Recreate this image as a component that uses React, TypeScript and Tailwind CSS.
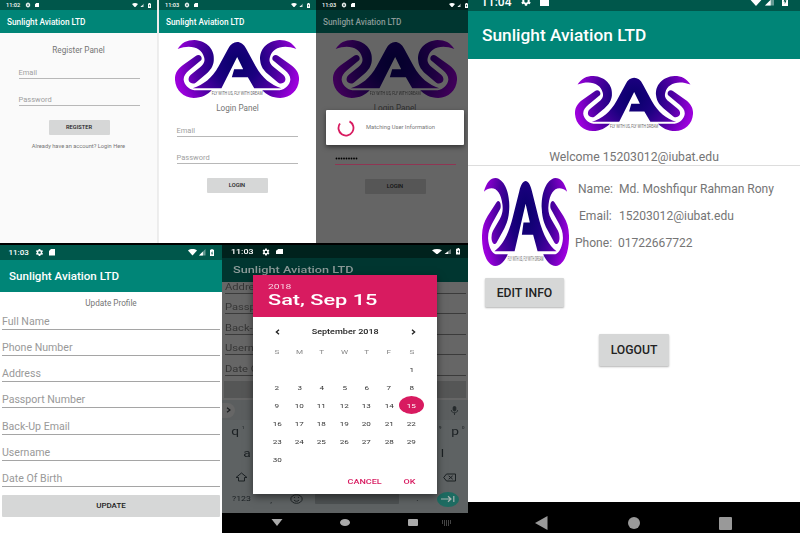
import React from "react";

function Logo({ id, className }: { id: string; className: string }) {
  const fill = `url(#${id})`;
  return (
    <svg viewBox="52 120 371 174" preserveAspectRatio="none" className={className}>
      <defs>
        <radialGradient id={id} gradientUnits="userSpaceOnUse" cx="237" cy="190" r="186">
          <stop offset="0" stopColor="#08006a" />
          <stop offset="0.35" stopColor="#1c0080" />
          <stop offset="0.65" stopColor="#4b00a0" />
          <stop offset="1" stopColor="#9c00dc" />
        </radialGradient>
      </defs>
      {[false, true].map((flip) => (
        <g key={String(flip)} fill={fill} transform={flip ? "translate(475 0) scale(-1 1)" : undefined}>
          <path d="M60 147 C72 128 88 120 110 120 C148 122 172 150 168 182 C166 200 158 210 146 221 L114 248 C104 255 90 247 93 235 C94 229 97 226 102 222 L128 201 C140 191 142 182 139 172 C132 144 100 132 60 147Z" />
          <path d="M130 181 C136 172 126 160 114 168 L76 195 C58 208 51 222 52 240 C54 272 78 293 108 294 C132 294 150 284 162 271 L110 271 C92 268 80 254 78 240 C77 228 84 220 94 211Z" />
        </g>
      ))}
      <path
        fill={fill}
        d="M105 265 C138 253 162 236 183 198 L211 146 C224 119 252 119 265 146 L293 198 C314 236 338 253 370 265 L289 265 L270 232 L222 232 L229 208 L256 208 L238 171 L191 265Z"
      />
      <text x="238" y="285" textAnchor="middle" textLength="152" lengthAdjust="spacingAndGlyphs" fontSize="15" fontFamily="Roboto, sans-serif" fill="#666">
        FLY WITH US, FLY WITH DREAM
      </text>
    </svg>
  );
}

function Gear({ className }: { className: string }) {
  return (
    <svg viewBox="2 2 22 20" className={className} fill="currentColor">
      <path d="M19.4 13c.1-.6.1-1.400 0-2l2.100-1.600-2-3.500-2.500 1a7 7 0 0 0-1.700-1L15 3.200h-4l-.4 2.700a7 7 0 0 0-1.700 1l-2.500-1-2 3.500L6.500 11c-.1.600-.1 1.400 0 2l-2.100 1.600 2 3.500 2.500-1a7 7 0 0 0 1.700 1l.4 2.700h4l.4-2.700a7 7 0 0 0 1.700-1l2.500 1 2-3.500zM13 15.200a3.200 3.200 0 1 1 0-6.400 3.200 3.200 0 0 1 0 6.400z" />
    </svg>
  );
}
function Sd({ className }: { className: string }) {
  return (
    <svg viewBox="0 0 18 20" preserveAspectRatio="none" className={className} fill="currentColor">
      <path d="M6 0H18V20H0V6z" />
    </svg>
  );
}
function Wifi({ className }: { className: string }) {
  return (
    <svg viewBox="0 0 24 18" preserveAspectRatio="none" className={className} fill="currentColor">
      <path d="M0 4C7-1 17-1 24 4L12 18z" />
    </svg>
  );
}
function Signal({ className }: { className: string }) {
  return (
    <svg viewBox="0 0 20 20" preserveAspectRatio="none" className={className} fill="currentColor">
      <path d="M0 20L20 0V20z" opacity=".4" />
      <path d="M0 20L12 8V20z" />
    </svg>
  );
}
function Battery({ className }: { className: string }) {
  return (
    <svg viewBox="0 0 12 20" preserveAspectRatio="none" className={className}>
      <path fill="currentColor" fillRule="evenodd" d="M4 0H8V2H12V20H0V2H4zM7 5L3 12H5.500V17L9 10H7z" />
    </svg>
  );
}

function SmallBars({ time, dim }: { time: string; dim?: boolean }) {
  return (
    <>
      <div className={`flex h-[10px] shrink-0 items-center pr-[6px] pl-[6px] text-white ${dim ? "bg-[#00221d]" : "bg-[#00574b]"}`}>
        <span className="w-[15px] text-[5.600px] leading-[10px] font-medium">{time}</span>
        <Gear className="ml-[3.500px] size-[6px]" />
        <Sd className="ml-[4px] h-[4.500px] w-[4px]" />
        <Wifi className="ml-auto h-[4.500px] w-[6px]" />
        <Signal className="ml-[1.500px] size-[4.500px]" />
        <Battery className="ml-[4px] h-[5px] w-[3px]" />
      </div>
      <div className={`flex h-[23px] shrink-0 items-center pt-[1px] pl-[7px] text-[8.250px] font-medium ${dim ? "bg-[#003630] text-[#8b9a98]" : "bg-[#008577] text-white"}`}>
        Sunlight Aviation LTD
      </div>
    </>
  );
}

function SmallField({ label, className }: { label: string; className: string }) {
  return (
    <div className={`flex h-[13px] w-[121px] items-end border-b border-[#b8b8b8] text-[7.500px] leading-[11px] text-[#a0a0a0] ${className}`}>
      {label}
    </div>
  );
}

function SmallButton({ label, className }: { label: string; className: string }) {
  return (
    <div className={`flex h-[15px] w-[61px] items-center justify-center rounded-[1px] pt-[0.500px] text-[5.700px] font-medium ${className}`}>
      {label}
    </div>
  );
}

function RegisterScreen() {
  return (
    <section className="flex w-[158px] shrink-0 flex-col border-r border-[#ececec] bg-[#fafafa]">
      <SmallBars time="11:02" />
      <div className="mt-[11px] h-[13px] text-center text-[8.200px] leading-[13px] text-[#757575]">Register Panel</div>
      <SmallField label="Email" className="mt-[9px] ml-[18.500px]" />
      <SmallField label="Password" className="mt-[14px] ml-[18.500px]" />
      <SmallButton label="REGISTER" className="mt-[14px] ml-[48.500px] bg-[#d6d7d7] text-[#222]" />
      <div className="mt-[6px] text-center text-[5.700px] leading-[10px] text-[#757575]">Already have an account? Login Here</div>
    </section>
  );
}

function LoginScreen() {
  return (
    <section className="flex w-[158px] shrink-0 flex-col border-l border-[#eeeeee] bg-white">
      <SmallBars time="11:03" />
      <Logo id="login" className="mt-[7px] ml-[16px] h-[58px] w-[124px] shrink-0" />
      <div className="mt-[4px] h-[12px] text-center text-[8.200px] leading-[13px] text-[#757575]">Login Panel</div>
      <SmallField label="Email" className="mt-[10px] ml-[17.500px]" />
      <SmallField label="Password" className="mt-[14px] ml-[17.500px]" />
      <SmallButton label="LOGIN" className="mt-[14px] ml-[47.500px] bg-[#d6d7d7] text-[#222]" />
    </section>
  );
}

function MatchingScreen() {
  return (
    <section className="relative w-[152px] shrink-0 overflow-hidden">
      <div className="flex h-full w-[158px] flex-col bg-[#656565]">
        <SmallBars time="11:03" dim />
        <Logo id="matching" className="mt-[7px] ml-[17px] h-[58px] w-[124px] shrink-0 brightness-[0.4]" />
        <div className="mt-[4px] h-[12px] text-center text-[8.200px] leading-[13px] text-[#2f2f2f]">Login Panel</div>
        <div className="mt-[37px] ml-[18.500px] flex h-[14px] w-[121px] items-center border-b border-[#8f3553]">
          <svg viewBox="0 0 24 3" className="mt-[2px] h-[3px] w-[24px]">
            {Array.from({ length: 9 }, (_, i) => (
              <circle key={i} cx={1.500 + i * 2.500} cy="1.500" r="0.900" fill="#000" />
            ))}
          </svg>
        </div>
        <SmallButton label="LOGIN" className="mt-[14px] ml-[48.500px] bg-[#565656] text-[#111]" />
      </div>
      <div className="absolute top-[110px] left-[10px] flex h-[35px] w-[138px] items-center rounded-[1px] bg-white shadow-[0_2px_5px_rgba(0,0,0,0.5)]">
        <svg viewBox="0 0 18 18" className="ml-[11px] size-[18px]" fill="none" stroke="#d81b60" strokeWidth="1.800">
          <path d="M3 4.500A7.500 7.500 0 1 0 12.500 2.400" />
        </svg>
        <span className="ml-[11px] text-[5.800px] text-[#777]">Matching User Information</span>
      </div>
    </section>
  );
}

const fields = ["Full Name", "Phone Number", "Address", "Passport Number", "Back-Up Email", "Username", "Date Of Birth"];

function UpdateScreen() {
  return (
    <section className="flex w-[222px] shrink-0 flex-col bg-white">
      <div className="flex h-[15px] shrink-0 items-center bg-[#00574b] px-[8.500px] text-white">
        <span className="w-[21px] text-[8px] leading-[16px] font-medium">11:03</span>
        <Gear className="ml-[5px] size-[9px]" />
        <Sd className="ml-[5px] h-[6.500px] w-[6px]" />
        <Wifi className="ml-auto h-[6.500px] w-[9px]" />
        <Signal className="ml-[2px] size-[6.500px]" />
        <Battery className="ml-[4px] h-[7.500px] w-[4px]" />
      </div>
      <div className="flex h-[32px] shrink-0 items-center bg-[#008577] pt-[2px] pl-[9px] text-[11.600px] font-medium text-white">Sunlight Aviation LTD</div>
      <div className="mt-[4px] h-[13px] text-center text-[8.200px] leading-[14px] text-[#757575]">Update Profile</div>
      {fields.map((f) => (
        <div key={f} className="mx-[2px] h-[26.300px] shrink-0">
          <div className="flex h-[20.500px] items-end border-b border-[#a5a5a5] text-[10.600px] leading-[14px] text-[#999]">{f}</div>
        </div>
      ))}
      <div className="mx-[2px] mt-[2px] flex h-[21.500px] items-center justify-center rounded-[1px] bg-[#d6d7d7] pt-[1px] text-[8px] font-medium text-[#222]">UPDATE</div>
    </section>
  );
}

const weeks = [
  ["S", "M", "T", "W", "T", "F", "S"],
  ["", "", "", "", "", "", "1"],
  ["2", "3", "4", "5", "6", "7", "8"],
  ["9", "10", "11", "12", "13", "14", "15"],
  ["16", "17", "18", "19", "20", "21", "22"],
  ["23", "24", "25", "26", "27", "28", "29"],
  ["30", "", "", "", "", "", ""],
];

function Key({ children, className }: { children: React.ReactNode; className: string }) {
  return <span className={`inline-block scale-x-125 text-[#1b2023] ${className}`}>{children}</span>;
}

function DatePicker() {
  return (
    <div className="absolute top-[30px] left-[31px] flex h-[219px] w-[184px] flex-col bg-white shadow-[0_3px_8px_rgba(0,0,0,0.5)]">
      <div className="flex h-[42px] shrink-0 flex-col bg-[#d81b60] pt-[6.500px] pl-[15px] text-white">
        <span className="origin-left scale-x-[1.350] text-[7.700px] leading-[10px] text-[#f7d1df]">2018</span>
        <span className="origin-left scale-x-[1.400] text-[15.500px] leading-[17px] font-medium">Sat, Sep 15</span>
      </div>
      <div className="mt-[9px] flex h-[12px] shrink-0 items-center justify-between px-[21.500px] text-[#222]">
        <svg viewBox="0 0 6 8" className="h-[6px] w-[5px]" fill="none" stroke="currentColor" strokeWidth="1.800">
          <path d="M5 1L1.500 4L5 7" />
        </svg>
        <span className="scale-x-[1.330] pt-[1px] text-[6.800px] font-medium">September 2018</span>
        <svg viewBox="0 0 6 8" className="h-[6px] w-[5px]" fill="none" stroke="currentColor" strokeWidth="1.800">
          <path d="M1 1L4.500 4L1 7" />
        </svg>
      </div>
      <div className="mt-[4px] ml-[12.800px] grid w-[157px] shrink-0 grid-cols-7 text-[6px]">
        {weeks.flatMap((w, r) =>
          w.map((d, c) => (
            <div key={`${r}-${c}`} className={`flex h-[18px] items-center justify-center ${r === 0 ? "text-[#888]" : "text-[#333]"}`}>
              {d === "15" ? (
                <span className="flex h-[18px] w-[25px] shrink-0 items-center justify-center rounded-[50%] bg-[#d81b60] text-white">
                  <span className="scale-x-[1.350]">15</span>
                </span>
              ) : (
                <span className="scale-x-[1.350]">{d}</span>
              )}
            </div>
          )),
        )}
      </div>
      <div className="mt-[9.500px] flex h-[10px] items-center text-[6.700px] font-medium text-[#d81b60]">
        <span className="ml-[94px] w-[35px] text-center"><span className="inline-block scale-x-[1.350]">CANCEL</span></span>
        <span className="ml-[17px] w-[20px] text-center"><span className="inline-block scale-x-[1.350]">OK</span></span>
      </div>
    </div>
  );
}

function DateScreen() {
  return (
    <section className="relative flex w-[246px] shrink-0 flex-col bg-[#666]">
      <div className="flex h-[13px] shrink-0 items-center bg-[#00221d] pr-[8px] pl-[9px] text-white">
        <span className="w-[29px] text-[7px] leading-[14px] font-medium"><span className="inline-block origin-left scale-x-[1.270]">11:03</span></span>
        <Gear className="ml-[1px] h-[8px] w-[10px]" />
        <Sd className="ml-[5px] h-[5.500px] w-[7px]" />
        <Wifi className="ml-auto h-[5.500px] w-[10px]" />
        <Signal className="ml-[2px] h-[5.500px] w-[7px]" />
        <Battery className="ml-[5px] h-[6.500px] w-[4.500px]" />
      </div>
      <div className="flex h-[24px] shrink-0 items-center bg-[#003630] pt-[1px] pl-[10.500px] text-[9.700px] font-medium text-[#8b9a98]">
        <span className="origin-left scale-x-[1.310]">Sunlight Aviation LTD</span>
      </div>
      {["Address", "Passport Number", "Back-Up Email", "Username", "Date Of Birth"].map((f, i) => (
        <div key={f} className={`mx-[2.500px] flex shrink-0 items-end border-b border-[#3b3b3b] text-[8.600px] leading-[11px] text-[#353535] ${i === 0 ? "h-[12px]" : "h-[20.400px]"}`}>
          <span className="origin-left scale-x-[1.300]">{f}</span>
        </div>
      ))}
      <div className="mx-[2px] mt-[5.500px] h-[17px] shrink-0 bg-[#555656]" />
      <div className="mt-[2px] flex h-[20px] shrink-0 items-center justify-between bg-[#5b5e5f] pr-[9px]">
        <span className="flex h-[15px] w-[13px] items-center justify-center rounded-r-full bg-[#666]">
          <svg viewBox="0 0 6 8" className="h-[6px] w-[5px]" fill="none" stroke="#16191b" strokeWidth="1.500">
            <path d="M1 1L5 4L1 7" />
          </svg>
        </span>
        <svg viewBox="0 0 10 10" preserveAspectRatio="none" className="h-[9px] w-[9px]" fill="none" stroke="#24292b" strokeWidth="1">
          <rect x="3.500" y="0.500" width="3" height="5" rx="1.500" fill="#24292b" />
          <path d="M1.500 4.500C1.500 8.500 8.500 8.500 8.500 4.500M5 7.500V10" />
        </svg>
      </div>
      <div className="flex h-[92.500px] shrink-0 flex-col bg-[#5e6263]">
        <div className="flex h-[24px] items-center justify-between pr-[4px] pl-[10px] text-[11px]">
          <span className="flex"><Key className="">q</Key><Key className="mt-[1px] ml-[4px] text-[4px] leading-[5px]">1</Key></span>
          <span className="flex"><Key className="mt-[1px] mr-[10px] text-[4px] leading-[5px]">9</Key><Key className="">p</Key><Key className="mt-[1px] ml-[4px] text-[4px] leading-[5px]">0</Key></span>
        </div>
        <div className="flex h-[21px] items-center justify-between pr-[24px] pl-[22px] text-[11px]">
          <Key className="">a</Key>
          <Key className="">l</Key>
        </div>
        <div className="flex h-[24px] items-center justify-between pr-[12px] pl-[13px]">
          <svg viewBox="0 0 13 10" className="h-[10px] w-[13px]" fill="none" stroke="#1b2023" strokeWidth="1">
            <path d="M6.500 1L1 5.500H3.500V9H9.500V5.500H12z" />
          </svg>
          <svg viewBox="0 0 13 9" className="h-[9px] w-[13px]" fill="none" stroke="#1b2023" strokeWidth="1">
            <path d="M3.500 1H12.500V8H3.500L0.700 4.500zM5.700 2.800L9.700 6.200M9.700 2.800L5.700 6.200" />
          </svg>
        </div>
        <div className="flex h-[20px] items-center pl-[9.500px] text-[7px]">
          <Key className="w-[20px] origin-left">?123</Key>
          <Key className="mt-[4px] ml-[19.500px] w-[6px]">,</Key>
          <svg viewBox="0 0 13 10" className="ml-[13px] h-[10px] w-[13px] shrink-0" fill="none" stroke="#1b2023" strokeWidth="0.900">
            <ellipse cx="6.500" cy="5" rx="5.700" ry="4.300" />
            <path d="M4 6C5 7.700 8 7.700 9 6M4.500 3V4M8.500 3V4" />
          </svg>
          <span className="ml-[12px] h-[10px] w-[84px] shrink-0 rounded-[1px] bg-[#4d5152]" />
          <Key className="ml-[18px] w-[6px]">.</Key>
          <span className="ml-[14px] flex h-[15px] w-[22px] shrink-0 items-center justify-center rounded-[50%] bg-[#1d6b61]">
            <svg viewBox="0 0 14 8" className="h-[8px] w-[14px]" fill="none" stroke="#a9b5b3" strokeWidth="1.200">
              <path d="M0 4H10M7 1.200L10 4L7 6.800M12.800 1V7" />
            </svg>
          </span>
        </div>
      </div>
      <div className="flex flex-1 items-center bg-black pl-[49px] text-[#aaa]">
        <svg viewBox="0 0 12 7" className="h-[7px] w-[12px]" fill="currentColor"><path d="M0.500 0H11.500L6 7z" /></svg>
        <span className="ml-[57px] h-[7px] w-[10px] rounded-[50%] bg-[#aaa]" />
        <span className="ml-[58px] h-[7px] w-[10px] rounded-[1px] bg-[#aaa]" />
        <svg viewBox="0 0 12 6" className="ml-[23px] h-[6px] w-[12px]" stroke="#888" strokeWidth="1" strokeDasharray="1 1">
          <path d="M1 1H11M1 3H11M3 5H9" />
        </svg>
      </div>
      <DatePicker />
    </section>
  );
}

function ProfileScreen() {
  const rows = [
    ["Name:", "Md. Moshfiqur Rahman Rony", "pl-[110px]", "w-[41px]"],
    ["Email:", "15203012@iubat.edu", "pl-[111px]", "w-[40px]"],
    ["Phone:", "01722667722", "pl-[107px]", "w-[43px]"],
  ];
  return (
    <section className="flex h-[533px] w-[332px] shrink-0 flex-col bg-white">
      <div className="flex h-[11px] shrink-0 items-start overflow-hidden bg-[#00574b] pr-[12px] pl-[13px] text-white">
        <span className="mt-[-5px] w-[31px] text-[12px] leading-[14px] font-medium">11:04</span>
        <Gear className="mt-[-5px] ml-[8px] size-[12px]" />
        <Sd className="mt-[-4px] ml-[8px] h-[10px] w-[9px]" />
        <Wifi className="mt-[-4.500px] ml-auto h-[10px] w-[14px]" />
        <Signal className="mt-[-4px] ml-[2px] size-[9.500px]" />
        <Battery className="mt-[-5px] ml-[8px] h-[11px] w-[6px]" />
      </div>
      <div className="flex h-[48px] shrink-0 items-center bg-[#008577] pt-[2px] pl-[14px] text-[17.300px] font-medium text-white">Sunlight Aviation LTD</div>
      <Logo id="banner" className="mt-[17px] ml-[107px] h-[55px] w-[118px] shrink-0" />
      <div className="mt-[17px] flex h-[18px] shrink-0 items-center justify-center border-b border-[#ddd] pt-[2px] text-[12.200px] text-[#757575]">Welcome 15203012@iubat.edu</div>
      <div className="relative h-[112px] shrink-0 pt-[9.500px]">
        {rows.map(([k, v, pad, w]) => (
          <div key={k} className={`flex h-[27px] items-center text-[12.050px] whitespace-nowrap text-[#757575] ${pad}`}>
            <span className={w}>{k}</span>
            <span>{v}</span>
          </div>
        ))}
        <Logo id="avatar" className="absolute top-[12px] left-[14px] h-[88px] w-[87px]" />
      </div>
      <div className="ml-[17px] flex h-[29px] w-[79px] shrink-0 items-center justify-center rounded-[1px] bg-[#d6d7d7] pt-[1px] text-[12.200px] font-medium text-[#222] shadow-[0_1px_2px_rgba(0,0,0,0.3)]">EDIT INFO</div>
      <div className="mt-[27px] ml-[131px] flex h-[32px] w-[70px] shrink-0 items-center justify-center rounded-[1px] bg-[#d6d7d7] pt-[1px] text-[12.200px] font-medium text-[#222] shadow-[0_1px_2px_rgba(0,0,0,0.3)]">LOGOUT</div>
      <div className="mt-auto flex h-[31px] shrink-0 items-start bg-black pt-[14px] pl-[67px]">
        <svg viewBox="0 0 13 14" className="h-[14px] w-[13px]" fill="#999"><path d="M0 7L12.500 0V14z" /></svg>
        <span className="mt-[1px] ml-[80px] size-[12px] rounded-full bg-[#999]" />
        <span className="mt-[0.500px] ml-[79px] size-[13px] rounded-[1px] bg-[#999]" />
      </div>
    </section>
  );
}

export default function App() {
  return (
    <main className="flex h-[533px] w-[800px] overflow-hidden bg-white font-['Roboto','Noto_Sans',sans-serif]">
      <div className="flex w-[468px] shrink-0 flex-col">
        <div className="flex h-[243px] shrink-0">
          <RegisterScreen />
          <LoginScreen />
          <MatchingScreen />
        </div>
        <div className="h-[2px] shrink-0 bg-black" />
        <div className="flex h-[288px] shrink-0">
          <UpdateScreen />
          <DateScreen />
        </div>
      </div>
      <ProfileScreen />
    </main>
  );
}
